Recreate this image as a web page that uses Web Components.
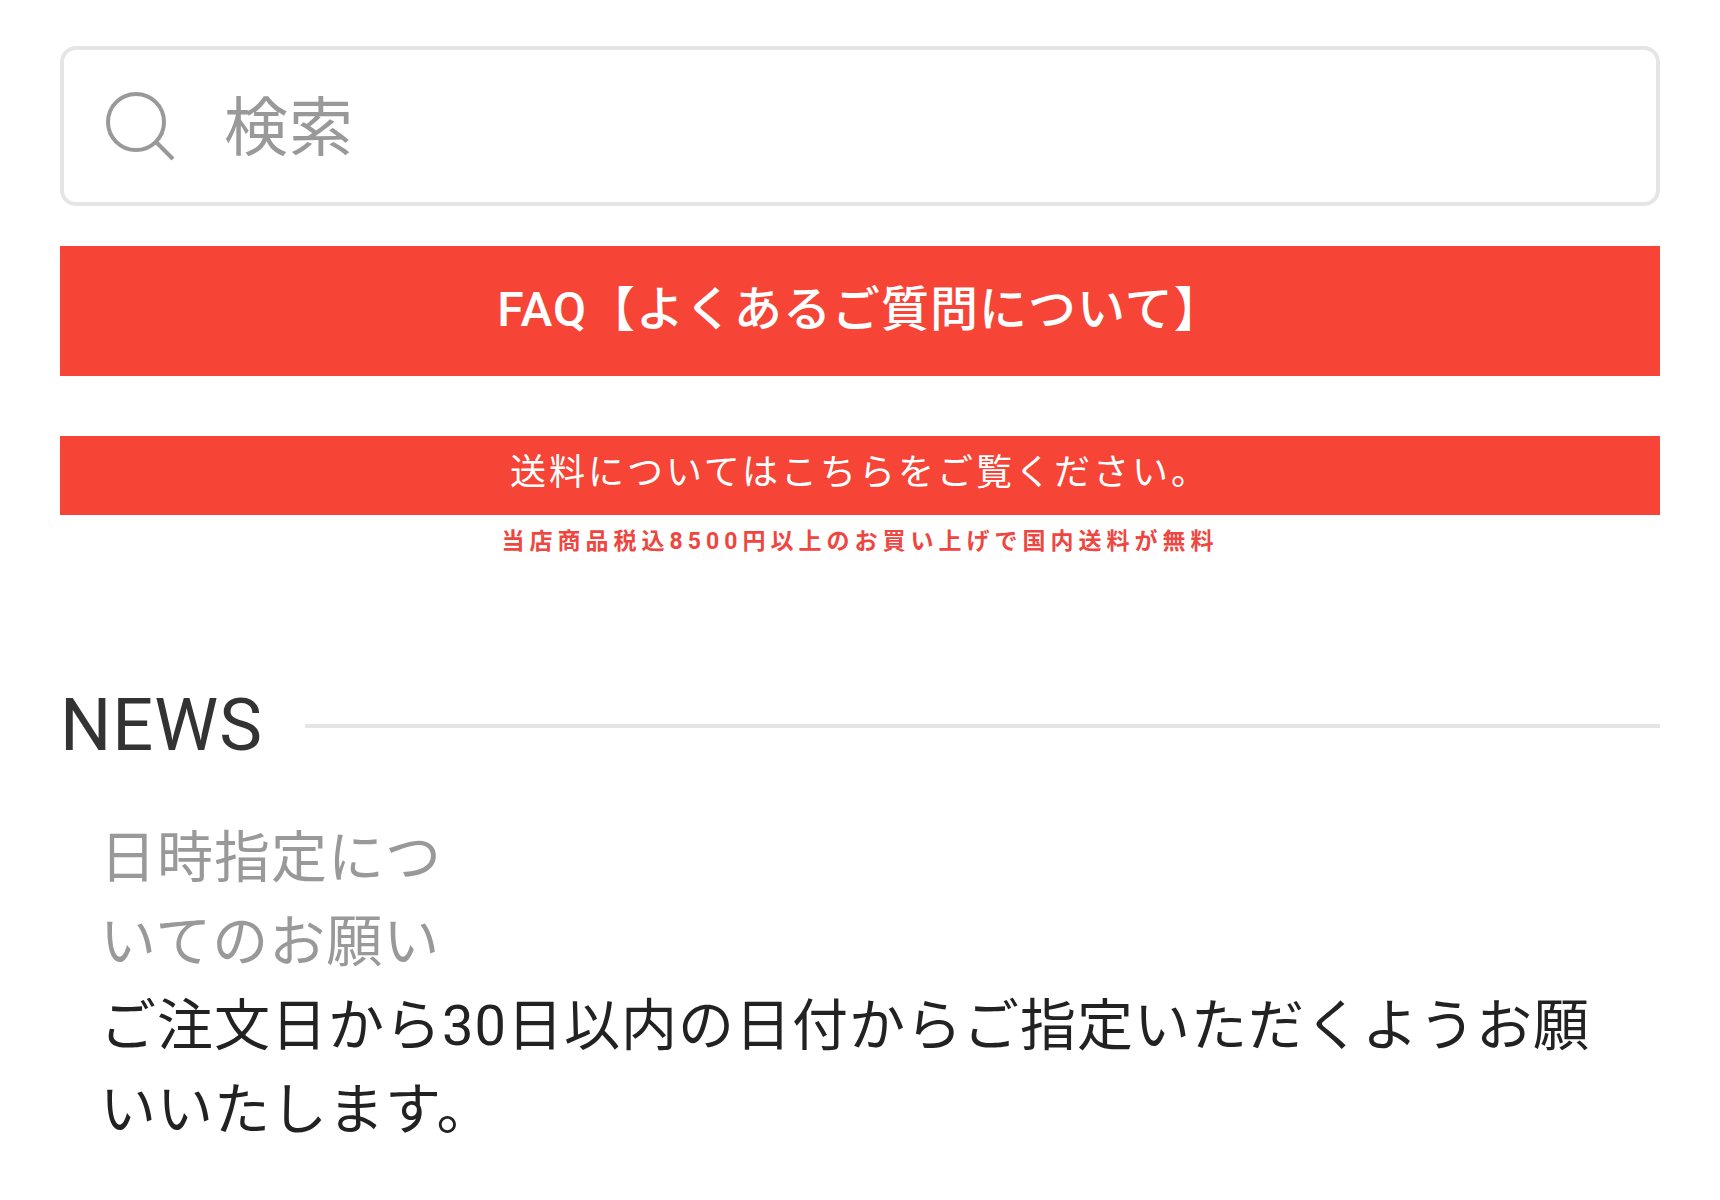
<!DOCTYPE html>
<html lang="ja">
<head>
<meta charset="utf-8">
<meta name="viewport" content="width=device-width, initial-scale=1">
<title>NEWS</title>
<style>
  body {
    margin: 0;
    background: #fff;
    color: #222;
    font-family: Roboto, "Noto Sans CJK JP", sans-serif;
    letter-spacing: 1px;
  }
</style>
</head>
<body>
<shop-page>
  <shop-search label="検索"></shop-search>
  <faq-banner href="#faq">FAQ【よくあるご質問について】</faq-banner>
  <shipping-banner href="#shipping">
    送料についてはこちらをご覧ください。
    <span slot="note">当店商品税込8500円以上のお買い上げで国内送料が無料</span>
  </shipping-banner>
  <news-section>
    <span slot="heading">NEWS</span>
    <news-item>
      <span slot="title">日時指定についてのお願い</span>
      ご注文日から30日以内の日付からご指定いただくようお願いいたします。
    </news-item>
  </news-section>
</shop-page>

<script>
  const define = (name, markup, setup) => {
    customElements.define(name, class extends HTMLElement {
      constructor() {
        super();
        this.attachShadow({ mode: 'open' }).innerHTML = markup;
      }
      connectedCallback() {
        if (setup) setup(this, this.shadowRoot);
      }
    });
  };
  const linkSetup = (host, root) => {
    root.querySelector('a').href = host.getAttribute('href');
  };

  define('shop-page', `
    <style>
      :host { display: block; padding: 46px 60px; }
      main { display: flex; flex-direction: column; }
    </style>
    <main><slot></slot></main>`);

  define('shop-search', `
    <style>
      :host { display: block; }
      label {
        display: flex; align-items: center; gap: 48px;
        box-sizing: border-box; height: 160px; padding: 0 40px;
        border: 4px solid #e5e5e5; border-radius: 16px;
      }
      svg { flex: none; width: 72px; height: 72px; }
      input {
        flex: 1; min-width: 0; height: 96px; padding: 4px 0 0; box-sizing: border-box;
        border: 0; outline: 0; background: none; color: #222;
        font: 400 64px/92px Roboto, "Noto Sans CJK JP", sans-serif;
        letter-spacing: 1px;
      }
      input::placeholder { color: #999; opacity: 1; }
    </style>
    <label>
      <svg viewBox="0 0 72 72" fill="none" stroke="#999" stroke-width="4" aria-hidden="true">
        <circle cx="32" cy="32" r="28"/>
        <path d="M52 52L69 69"/>
      </svg>
      <input type="search">
    </label>`, (host, root) => {
      const input = root.querySelector('input');
      input.placeholder = host.getAttribute('label');
      input.setAttribute('aria-label', host.getAttribute('label'));
    });

  define('faq-banner', `
    <style>
      :host { display: block; margin-top: 40px; }
      a {
        display: block; padding: 28px 24px 30px;
        background: #f64437; color: #fff; text-align: center;
        font-size: 48px; font-weight: 500; line-height: 72px; text-decoration: none;
      }
    </style>
    <a><slot></slot></a>`, linkSetup);

  define('shipping-banner', `
    <style>
      :host { display: block; margin-top: 60px; }
      a { display: block; text-align: center; text-decoration: none; }
      .bar {
        display: block; padding: 10px 0 15px; background: #f64437; color: #fff;
        font-size: 36px; font-weight: 400; line-height: 54px; letter-spacing: 3px;
      }
      .note {
        display: block; padding-top: 10px; color: #ee4640;
        font-size: 23px; font-weight: 700; line-height: 34px; letter-spacing: 5px;
      }
    </style>
    <a>
      <span class="bar"><slot></slot></span>
      <span class="note"><slot name="note"></slot></span>
    </a>`, linkSetup);

  define('news-section', `
    <style>
      :host { display: block; margin-top: 113px; }
      h2 {
        display: flex; align-items: center; gap: 42px; margin: 0;
        color: #333; font-size: 72px; font-weight: 400; line-height: 108px;
      }
      h2::after { content: ""; flex: 1; height: 4px; background: #e5e5e5; }
      .items { padding: 36px 40px; }
    </style>
    <section>
      <h2><slot name="heading"></slot></h2>
      <div class="items"><slot></slot></div>
    </section>`);

  define('news-item', `
    <style>
      :host { display: block; font-size: 56px; line-height: 84px; }
      dl, dd { margin: 0; }
      dt { max-width: 380px; color: #999; }
      dd { color: #222; }
    </style>
    <dl>
      <dt><slot name="title"></slot></dt>
      <dd><slot></slot></dd>
    </dl>`);
</script>
</body>
</html>
